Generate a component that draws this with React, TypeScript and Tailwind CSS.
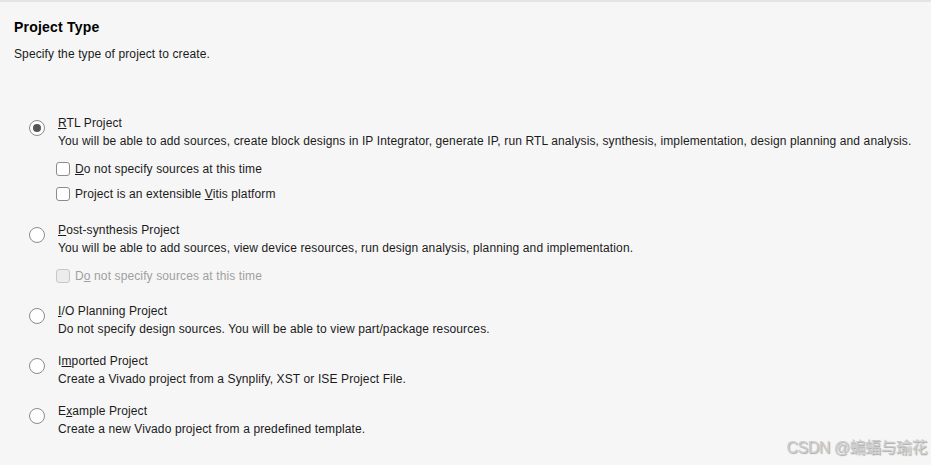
import React from 'react';

const font = { fontFamily: '"Liberation Sans", Arial, sans-serif' };

const Radio = ({ checked }: { checked?: boolean }) => (
  <div className="mt-[6px] w-[16px] h-[16px] shrink-0 rounded-full border border-[#8c8c8c] bg-white flex items-center justify-center">
    {checked && <div className="w-[8px] h-[8px] rounded-full bg-[#555555]" />}
  </div>
);

const Check = ({ label, disabled }: { label: React.ReactNode; disabled?: boolean }) => (
  <div className="h-[25px] flex items-center gap-[5px] pl-[27px]">
    <div
      className={
        disabled
          ? 'w-[14px] h-[14px] rounded-[3px] border border-[#c8c8c8] bg-[#ececec]'
          : 'w-[14px] h-[14px] rounded-[3px] border border-[#8c8c8c] bg-white'
      }
    />
    <span className={disabled ? 'text-[#a0a0a0]' : 'text-[#1b1b1b]'}>{label}</span>
  </div>
);

const Option = ({
  checked,
  title,
  desc,
  children,
  className = '',
}: {
  checked?: boolean;
  title: React.ReactNode;
  desc: string;
  children?: React.ReactNode;
  className?: string;
}) => (
  <div className={`flex gap-[13px] pl-[29px] ${className}`}>
    <Radio checked={checked} />
    <div className="flex flex-col">
      <div className="leading-[18px]">{title}</div>
      <div className="leading-[18px]">{desc}</div>
      {children && <div className="flex flex-col mt-[6px] -ml-[29px]">{children}</div>}
    </div>
  </div>
);

export default function App() {
  return (
    <div
      className="w-[931px] h-[465px] bg-[#f6f6f6] border-t-2 border-[#e4e4e4] text-[12px] tracking-[0.12px] text-[#1b1b1b] relative overflow-hidden"
      style={font}
    >
      <div className="pl-[14px] pt-[16px]">
        <h1 className="text-[14px] font-bold leading-[18px] tracking-[0.2px] text-black">Project Type</h1>
        <p className="mt-[9px] leading-[18px]">Specify the type of project to create.</p>
      </div>

      <div className="mt-[51px] flex flex-col gap-[14px]">
        <Option
          checked
          className="mb-[1px]"
          title={<><u>R</u>TL Project</>}
          desc="You will be able to add sources, create block designs in IP Integrator, generate IP, run RTL analysis, synthesis, implementation, design planning and analysis."
        >
          <Check label={<><u>D</u>o not specify sources at this time</>} />
          <Check label={<>Project is an extensible <u>V</u>itis platform</>} />
        </Option>

        <Option
          title={<><u>P</u>ost-synthesis Project</>}
          desc="You will be able to add sources, view device resources, run design analysis, planning and implementation."
        >
          <Check disabled label={<>D<u>o</u> not specify sources at this time</>} />
        </Option>

        <Option
          title={<><u>I</u>/O Planning Project</>}
          desc="Do not specify design sources. You will be able to view part/package resources."
        />

        <Option
          title={<>I<u>m</u>ported Project</>}
          desc="Create a Vivado project from a Synplify, XST or ISE Project File."
        />

        <Option
          title={<>E<u>x</u>ample Project</>}
          desc="Create a new Vivado project from a predefined template."
        />
      </div>

      <div
        className="absolute right-[4px] bottom-[5px] text-[16px] tracking-[-0.5px] text-[#cdcdcd] [text-shadow:1px_1px_1px_#a8a8a8]"
        style={{ fontFamily: '"Liberation Sans", "Noto Sans CJK SC", sans-serif' }}
      >
        CSDN @蝙蝠与瑜花
      </div>
    </div>
  );
}
